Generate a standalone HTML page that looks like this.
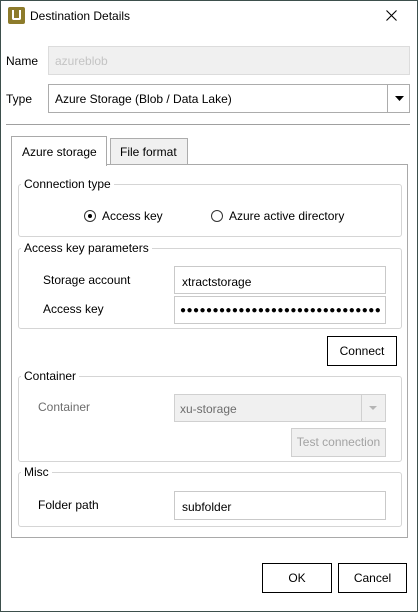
<!DOCTYPE html><html><head><style>
*{box-sizing:border-box}
body{margin:0;width:418px;height:612px;overflow:hidden;background:#fff;font-family:"Liberation Sans",sans-serif;font-size:12px;color:#000}
.win{position:absolute;left:0;top:0;width:418px;height:612px;background:#fff}
.frame{position:absolute;left:0;top:0;width:418px;height:612px;border:1px solid #3d4f4c;pointer-events:none}
.a{position:absolute}
.t{position:absolute;white-space:nowrap;line-height:14px}
.inp{position:absolute;border:1px solid #c9c9c9;background:#fff}
.grp{position:absolute;border:1px solid #d5d5d5;border-radius:3px}
.gl{position:absolute;background:#fff;padding:0 3px;line-height:14px;top:-8px;left:2px}
.btn{position:absolute;border:1px solid #adadad;background:#fff;text-align:center}
</style></head><body><div class="win">
<div class="a" style="left:8px;top:7px;width:17px;height:17px;background:#8d7b2b;border-radius:2px"></div>
<div class="a" style="left:12px;top:10px;width:9px;height:10px;border:2.5px solid #fff;border-top:none;border-radius:0 0 2px 2px"></div>
<div class="t" style="left:30px;top:9px">Destination Details</div>
<svg class="a" style="left:386px;top:10px" width="11" height="11"><path d="M0.5 0.5L10.5 10.5M10.5 0.5L0.5 10.5" stroke="#000" stroke-width="1.1"/></svg>

<div class="t" style="left:6px;top:54px">Name</div>
<div class="inp" style="left:48px;top:46px;width:362px;height:29px;background:#f0f0f0;border-color:#dcdcdc"></div>
<div class="t" style="left:55px;top:54px;color:#c4c4c4">azureblob</div>
<div class="t" style="left:6px;top:92px">Type</div>
<div class="inp" style="left:48px;top:84px;width:362px;height:29px;border-color:#acacac"></div>
<div class="a" style="left:387px;top:85px;width:1px;height:27px;background:#acacac"></div>
<svg class="a" style="left:395px;top:96px" width="9" height="5"><path d="M0 0H9L4.5 5Z"/></svg>
<div class="t" style="left:55px;top:92px">Azure Storage (Blob / Data Lake)</div>
<div class="a" style="left:6px;top:124px;width:404px;height:1px;background:#a0a0a0"></div>

<div class="a" style="left:11px;top:164px;width:397px;height:374px;border:1px solid #a9a9a9"></div>
<div class="a" style="left:110px;top:138px;width:78px;height:27px;border:1px solid #acacac;background:#f0f0f0"></div>
<div class="t" style="left:120px;top:145px">File format</div>
<div class="a" style="left:11px;top:136px;width:96px;height:30px;border:1px solid #a9a9a9;border-bottom:none;background:#fff"></div>
<div class="t" style="left:22px;top:145px">Azure storage</div>

<div class="grp" style="left:18px;top:184px;width:384px;height:53px"><span class="gl">Connection type</span></div>
<div class="a" style="left:84px;top:210px;width:12px;height:12px;border:1px solid #333;border-radius:50%"></div>
<div class="a" style="left:88px;top:214px;width:4px;height:4px;background:#000;border-radius:50%"></div>
<div class="t" style="left:102px;top:209px">Access key</div>
<div class="a" style="left:211px;top:210px;width:12px;height:12px;border:1px solid #333;border-radius:50%"></div>
<div class="t" style="left:229px;top:209px">Azure active directory</div>

<div class="grp" style="left:18px;top:248px;width:384px;height:81px"><span class="gl">Access key parameters</span></div>
<div class="t" style="left:43px;top:273px">Storage account</div>
<div class="inp" style="left:174px;top:266px;width:212px;height:28px"></div>
<div class="t" style="left:182px;top:275px">xtractstorage</div>
<div class="t" style="left:43px;top:302px">Access key</div>
<div class="inp" style="left:174px;top:296px;width:212px;height:28px;overflow:hidden"><div class="t" style="left:5px;top:7px;font-size:10px;letter-spacing:0.45px">●●●●●●●●●●●●●●●●●●●●●●●●●●●●●●●</div></div>
<div class="btn" style="left:327px;top:336px;width:70px;height:30px;border-color:#000;line-height:28px">Connect</div>

<div class="grp" style="left:18px;top:376px;width:384px;height:86px"><span class="gl">Container</span></div>
<div class="t" style="left:38px;top:400px;color:#6d6d6d">Container</div>
<div class="inp" style="left:174px;top:394px;width:212px;height:28px;background:#f0f0f0;border-color:#d0d0d0"></div>
<div class="a" style="left:361px;top:395px;width:1px;height:26px;background:#d0d0d0"></div>
<svg class="a" style="left:369px;top:406px" width="8" height="4"><path d="M0 0H8L4 4Z" fill="#b5b5b5"/></svg>
<div class="t" style="left:180px;top:402px;color:#6d6d6d">xu-storage</div>
<div class="btn" style="left:291px;top:428px;width:95px;height:29px;border-color:#cfcfcf;background:#f0f0f0;color:#a3a3a3;line-height:27px">Test connection</div>

<div class="grp" style="left:18px;top:472px;width:384px;height:55px"><span class="gl">Misc</span></div>
<div class="t" style="left:38px;top:498px">Folder path</div>
<div class="inp" style="left:174px;top:491px;width:212px;height:29px"></div>
<div class="t" style="left:182px;top:500px">subfolder</div>

<div class="btn" style="left:262px;top:563px;width:70px;height:30px;line-height:28px;border-color:#000">OK</div>
<div class="btn" style="left:338px;top:563px;width:69px;height:30px;line-height:28px;border-color:#000">Cancel</div>
</div><div class="frame"></div></body></html>
